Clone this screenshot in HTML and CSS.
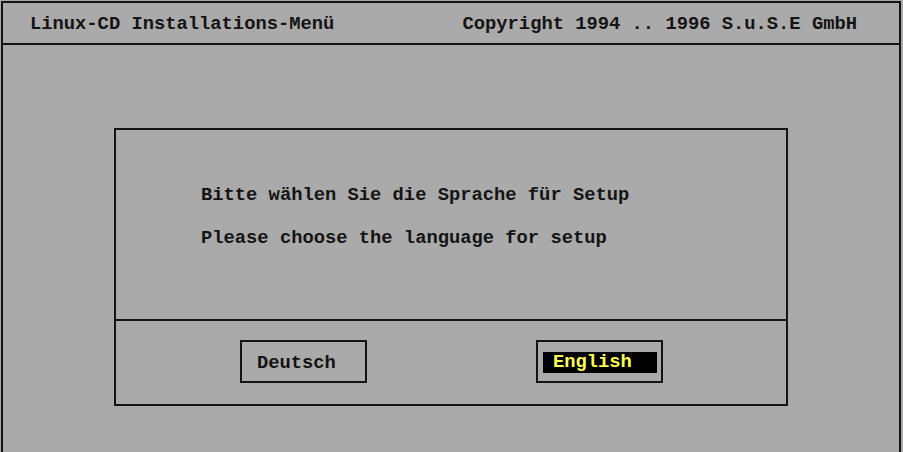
FILE: index.html
```html
<!DOCTYPE html>
<html lang="de">
<head>
    <meta charset="UTF-8">
    <meta name="viewport" content="width=device-width, initial-scale=1.0">
    <title>Linux-CD Installations-Menü</title>
    <link rel="stylesheet" href="styles.css">
</head>
<body>

    <div class="screen">
        <div class="titlebar">
            <span>Linux-CD Installations-Menü</span>
            <span>Copyright 1994 .. 1996 S.u.S.E GmbH</span>
        </div>

        <div class="desk">
            <div class="dialog">
                <div class="dialog-text">
                    <p>Bitte wählen Sie die Sprache für Setup</p>
                    <p>Please choose the language for setup</p>
                </div>
                <div class="dialog-buttons">
                    <div class="btn">Deutsch</div>
                    <div class="btn active"><span class="focus">English</span></div>
                </div>
            </div>
        </div>
    </div>

</body>
</html>
```

FILE: styles.css
```css
body {
    margin: 0;
    background-color: #aaaaaa;
    color: #141414;
    font-family: "Liberation Mono", "DejaVu Sans Mono", monospace;
    font-weight: bold;
    font-size: 18.8px;
    line-height: 18px;
    overflow: hidden;
}
.screen {
    box-sizing: border-box;
    height: 451px;
    margin: 1px 2px 0 1px;
    border: solid #141414;
    border-width: 2px 2px 0 2px;
}
.titlebar {
    display: flex;
    justify-content: space-between;
    height: 28px;
    padding: 12px 42px 0 27px;
    border-bottom: 2px solid #141414;
    white-space: pre;
}
.desk {
    padding: 83px 0 0 111px;
}
.dialog {
    box-sizing: border-box;
    width: 674px;
    height: 278px;
    border: 2px solid #141414;
}
.dialog-text {
    box-sizing: border-box;
    height: 191px;
    padding: 56px 0 0 85px;
    border-bottom: 2px solid #141414;
}
.dialog-text p {
    margin: 0 0 25px 0;
    white-space: pre;
}
.dialog-buttons {
    display: flex;
    gap: 169px;
    padding: 19px 0 0 124px;
}
.btn {
    box-sizing: border-box;
    width: 127px;
    height: 43px;
    padding: 12px 0 0 15px;
    border: 2px solid #141414;
}
.btn.active {
    padding: 10px 4px 0 5px;
}
.focus {
    display: block;
    height: 21px;
    line-height: 21px;
    padding-left: 10px;
    background-color: #000;
    color: #fcfc54;
}
```
